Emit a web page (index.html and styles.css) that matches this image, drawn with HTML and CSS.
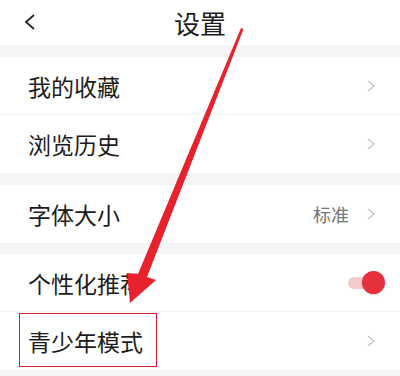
FILE: index.html
```html
<!DOCTYPE html>
<html lang="zh-CN">

<head>
    <meta charset="UTF-8">
    <meta name="viewport" content="width=device-width, initial-scale=1.0">
    <title>设置</title>
    <link rel="stylesheet" href="styles.css">
</head>

<body>
    <div class="page">
        <div class="header">
            <svg class="back" width="12" height="16" viewBox="0 0 12 16">
                <polyline points="10,1 2,8 10,15" fill="none" stroke="#222" stroke-width="1.8" />
            </svg>
            <h1 class="title">设置</h1>
        </div>

        <div class="band"></div>
        <div class="group">
            <div class="row line">
                <span class="label">我的收藏</span>
                <svg class="more" width="8" height="12" viewBox="0 0 8 12">
                    <polyline points="1,1 7,6 1,11" fill="none" stroke="#c4c4c4" stroke-width="1.3" />
                </svg>
            </div>
            <div class="row">
                <span class="label">浏览历史</span>
                <svg class="more" width="8" height="12" viewBox="0 0 8 12">
                    <polyline points="1,1 7,6 1,11" fill="none" stroke="#c4c4c4" stroke-width="1.3" />
                </svg>
            </div>
        </div>

        <div class="band"></div>
        <div class="group">
            <div class="row">
                <span class="label">字体大小</span>
                <span class="right">
                    <span class="value">标准</span>
                    <svg class="more" width="8" height="12" viewBox="0 0 8 12">
                        <polyline points="1,1 7,6 1,11" fill="none" stroke="#c4c4c4" stroke-width="1.3" />
                    </svg>
                </span>
            </div>
        </div>

        <div class="band thin"></div>
        <div class="group">
            <div class="row line">
                <span class="label">个性化推荐</span>
                <span class="switch"><span class="knob"></span></span>
            </div>
            <div class="row">
                <span class="label">青少年模式</span>
                <svg class="more" width="8" height="12" viewBox="0 0 8 12">
                    <polyline points="1,1 7,6 1,11" fill="none" stroke="#c4c4c4" stroke-width="1.3" />
                </svg>
                <span class="mark"></span>
            </div>
        </div>
        <div class="band"></div>

        <!-- annotation arrow over the page -->
        <svg class="arrow" width="400" height="376" viewBox="0 0 400 376">
            <polygon points="241,28 243.5,29 147,277 156,280 130,303 127,273 138,274" fill="#e8222d" />
        </svg>
    </div>
</body>

</html>
```

FILE: styles.css
```css
body {
    margin: 0;
    font-family: "Noto Sans CJK SC", "Noto Sans", sans-serif;
    color: #1c1c1c;
    background: #f5f5f5;
}

.page {
    position: relative;
    width: 400px;
    height: 376px;
    overflow: hidden;
}

.header {
    display: flex;
    align-items: center;
    justify-content: center;
    height: 45px;
    background: #fff;
    position: relative;
}

.back {
    position: absolute;
    left: 24px;
    top: 14px;
}

.title {
    margin: 0;
    font-size: 26px;
    font-weight: 400;
    line-height: 40px;
}

.band {
    height: 12px;
    background: #f5f5f5;
}

.band.thin {
    height: 11px;
}

.group {
    background: #fff;
}

.row {
    position: relative;
    display: flex;
    align-items: center;
    justify-content: space-between;
    height: 58px;
    padding: 0 25px 0 28px;
}

.row.line {
    height: 57px;
    border-bottom: 1px solid #f2f2f2;
}

.label {
    font-size: 23px;
}

.right {
    display: flex;
    align-items: center;
    gap: 18px;
}

.value {
    font-size: 18px;
    color: #777;
}

.switch {
    position: relative;
    width: 28px;
    height: 12px;
    margin-right: -1px;
    border-radius: 6px;
    background: #f6c9cb;
}

.knob {
    position: absolute;
    right: -9px;
    top: -6px;
    width: 23px;
    height: 23px;
    border-radius: 50%;
    background: #e6313a;
    box-shadow: 0 1px 2px rgba(0, 0, 0, 0.15);
}

.mark {
    position: absolute;
    left: 19px;
    top: 1px;
    width: 136px;
    height: 52px;
    border: 1.5px solid #d3202b;
}

.arrow {
    position: absolute;
    left: 0;
    top: 0;
    pointer-events: none;
}
```
